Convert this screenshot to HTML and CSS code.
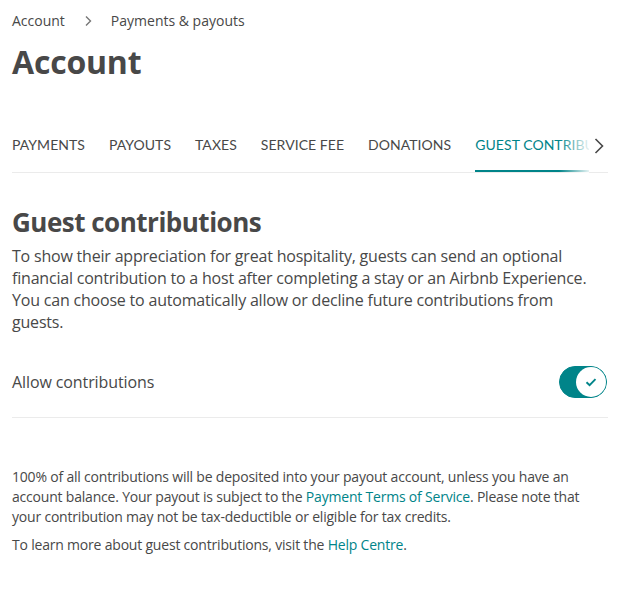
FILE: index.html
```html
<!DOCTYPE html>
<html lang="en">
<head>
<meta charset="utf-8">
<title>Account</title>
<link rel="stylesheet" href="styles.css">
</head>
<body>
<div class="page">
  <nav class="crumbs">
    <a class="crumb" href="#">Account</a>
    <svg class="crumb-sep" viewBox="0 0 10 12" width="10" height="12"><path d="M3 1.5 L7.5 6 L3 10.5" fill="none" stroke="#767676" stroke-width="1.4"/></svg>
    <span class="crumb current">Payments &amp; payouts</span>
  </nav>
  <h1 class="title">Account</h1>

  <div class="tabs-wrap">
    <div class="tabs">
      <span class="tab">PAYMENTS</span>
      <span class="tab">PAYOUTS</span>
      <span class="tab">TAXES</span>
      <span class="tab">SERVICE FEE</span>
      <span class="tab">DONATIONS</span>
      <span class="tab active">GUEST CONTRIBUTIONS</span>
    </div>
    <div class="tabs-fade"></div>
    <svg class="tabs-next" viewBox="0 0 12 18" width="12" height="18"><path d="M2.5 2 L9.5 9 L2.5 16" fill="none" stroke="#484848" stroke-width="1.6"/></svg>
  </div>

  <section class="section">
    <h2 class="heading">Guest contributions</h2>
    <p class="lead">To show their appreciation for great hospitality, guests can send an optional financial contribution to a host after completing a stay or an Airbnb Experience. You can choose to automatically allow or decline future contributions from guests.</p>

    <div class="setting">
      <span class="setting-label">Allow contributions</span>
      <span class="toggle">
        <span class="knob">
          <svg viewBox="0 0 12 12" width="12" height="12"><path d="M1.5 6.2 L4.6 9.2 L10.5 3.2" fill="none" stroke="#008489" stroke-width="1.9"/></svg>
        </span>
      </span>
    </div>

    <p class="note">100% of all contributions will be deposited into your payout account, unless you have an account balance. Your payout is subject to the <a href="#">Payment Terms of Service</a>. Please note that your contribution may not be tax-deductible or eligible for tax credits.</p>
    <p class="note">To learn more about guest contributions, visit the <a href="#">Help Centre</a>.</p>
  </section>
</div>
</body>
</html>
```

FILE: styles.css
```css
* { box-sizing: border-box; }
html, body { margin: 0; padding: 0; background: #fff; }
body {
  font-family: "Open Sans", "Noto Sans", sans-serif;
  color: #484848;
  -webkit-font-smoothing: antialiased;
}
.page {
  width: 596px;
  margin-left: 12px;
  padding-top: 11px;
}
.crumbs {
  display: flex;
  align-items: center;
  height: 20px;
  font-size: 14px;
  line-height: 20px;
}
.crumb { color: #484848; text-decoration: none; }
.crumb-sep { margin: 0 18px 0 18px; }
.title {
  margin: 13px 0 0;
  font-size: 32px;
  line-height: 36px;
  font-weight: 700;
  letter-spacing: -0.2px;
}
.tabs-wrap {
  position: relative;
  margin-top: 51px;
  border-bottom: 1px solid #ebebeb;
  height: 42px;
}
.tabs {
  display: flex;
  gap: 24px;
  width: 577px;
  overflow: hidden;
  white-space: nowrap;
  font-family: Lato, "Liberation Sans", sans-serif;
  font-size: 14px;
  letter-spacing: 0.05px;
}
.tab {
  flex: none;
  padding-top: 4px;
  height: 41px;
  line-height: 20px;
  color: #484848;
}
.tab.active {
  color: #008489;
  border-bottom: 2px solid #008489;
}
.tabs-fade {
  position: absolute;
  top: 0;
  left: 547px;
  width: 30px;
  height: 42px;
  background: linear-gradient(to right, rgba(255,255,255,0), rgba(255,255,255,0.9));
}
.tabs-next {
  position: absolute;
  right: 3px;
  top: 6px;
}
.section { padding-top: 34px; }
.heading {
  margin: 0;
  font-size: 26px;
  line-height: 30px;
  font-weight: 700;
  letter-spacing: -0.5px;
}
.lead {
  margin: 8px 0 0;
  font-size: 16px;
  line-height: 22px;
  letter-spacing: -0.2px;
}
.setting {
  display: flex;
  align-items: center;
  justify-content: space-between;
  margin-top: 33px;
  padding-bottom: 19px;
  border-bottom: 1px solid #ebebeb;
}
.setting-label { font-size: 16px; line-height: 22px; letter-spacing: -0.1px; }
.toggle {
  display: flex;
  justify-content: flex-end;
  width: 48px;
  height: 32px;
  margin-right: 1px;
  border-radius: 16px;
  background: #008489;
  border: 1px solid #008489;
}
.knob {
  display: flex;
  align-items: center;
  justify-content: center;
  width: 30px;
  height: 30px;
  border-radius: 50%;
  background: #fff;
}
.note {
  margin: 0;
  font-size: 14px;
  line-height: 20px;
  letter-spacing: -0.2px;
}
.setting + .note { margin-top: 49px; }
.note + .note { margin-top: 8px; }
.note a { color: #008489; text-decoration: none; }
```
